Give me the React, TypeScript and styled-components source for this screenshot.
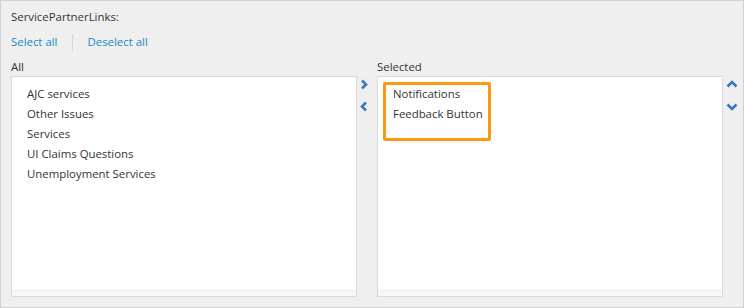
import React from 'react';
import styled, { createGlobalStyle } from 'styled-components';

const GlobalStyle = createGlobalStyle`
    html, body {
        margin: 0;
        padding: 0;
        background: #ffffff;
    }
    body {
        font-family: "Open Sans", "Liberation Sans", Arial, sans-serif;
    }
`;

const Panel = styled.div`
    box-sizing: border-box;
    width: 744px;
    height: 308px;
    background: #efefef;
    border: 1px solid #d2d2d2;
    padding: 7px 0 9px 10px;
    display: flex;
    flex-direction: column;
    font-size: 11.4px;
    color: #333333;
`;

const FieldTitle = styled.div`
    line-height: 18px;
    height: 18px;
`;

const LinkBar = styled.div`
    display: flex;
    align-items: center;
    margin-top: 7px;
    height: 18px;
`;

const LinkButton = styled.button`
    border: none;
    background: none;
    padding: 0;
    font: inherit;
    line-height: 18px;
    color: #1a87c6;
    cursor: pointer;
`;

const Divider = styled.span`
    width: 1px;
    height: 17px;
    background: #d6d6d6;
    margin: 0 14px 0 15px;
`;

const Columns = styled.div`
    display: grid;
    grid-template-columns: 346px 20px 346px 20px;
    grid-template-rows: 18px 221px;
    margin-top: 7px;
`;

const ColumnLabel = styled.div<{ $col: number }>`
    grid-column: ${p => p.$col};
    grid-row: 1;
    line-height: 18px;
`;

const ListBox = styled.div<{ $col: number }>`
    grid-column: ${p => p.$col};
    grid-row: 2;
    box-sizing: border-box;
    border: 1px solid #dadada;
    background: #ffffff;
    display: flex;
    flex-direction: column;
`;

const ListBody = styled.ul`
    flex: 1;
    list-style: none;
    margin: 0;
    padding: 7px 0 0 15px;
`;

const ListItem = styled.li`
    line-height: 20px;
    height: 20px;
    white-space: nowrap;
`;

const ScrollTrack = styled.div`
    height: 5px;
    background: #f6f6f6;
    border-top: 1px solid #ededed;
`;

const Highlight = styled.div`
    position: relative;
    &::after {
        content: '';
        position: absolute;
        left: -10px;
        top: -2px;
        width: 108px;
        height: 59px;
        box-sizing: border-box;
        border: 3px solid #fb9a10;
        border-radius: 2px;
        pointer-events: none;
    }
`;

const ArrowColumn = styled.div<{ $col: number; $pad: number }>`
    grid-column: ${p => p.$col};
    grid-row: 2;
    display: flex;
    flex-direction: column;
    align-items: flex-start;
    padding-left: ${p => p.$pad}px;
    padding-top: 3px;
    gap: 11px;
`;

const ArrowButton = styled.button`
    border: none;
    background: none;
    padding: 0;
    width: 12px;
    height: 11px;
    display: flex;
    align-items: center;
    justify-content: center;
    cursor: pointer;
    svg {
        display: block;
    }
`;

type Dir = 'left' | 'right' | 'up' | 'down';

const chevronPath: Record<Dir, string> = {
    right: 'M4 1.5 L8 5.5 L4 9.5',
    left: 'M8 1.5 L4 5.5 L8 9.5',
    up: 'M1.5 7.5 L6 3 L10.5 7.5',
    down: 'M1.5 3.5 L6 8 L10.5 3.5',
};

const Chevron: React.FC<{ dir: Dir }> = ({ dir }) => (
    <svg width="12" height="11" viewBox="0 0 12 11">
        <path d={chevronPath[dir]} fill="none" stroke="#3a78bd" strokeWidth="2.6" strokeLinecap="butt" strokeLinejoin="miter" />
    </svg>
);

const allItems = ['AJC services', 'Other Issues', 'Services', 'UI Claims Questions', 'Unemployment Services'];
const selectedItems = ['Notifications', 'Feedback Button'];

export default function App() {
    return (
        <>
            <GlobalStyle />
            <Panel>
                <FieldTitle>ServicePartnerLinks:</FieldTitle>
                <LinkBar>
                    <LinkButton>Select all</LinkButton>
                    <Divider />
                    <LinkButton>Deselect all</LinkButton>
                </LinkBar>
                <Columns>
                    <ColumnLabel $col={1}>All</ColumnLabel>
                    <ColumnLabel $col={3}>Selected</ColumnLabel>

                    <ListBox $col={1}>
                        <ListBody>
                            {allItems.map(item => <ListItem key={item}>{item}</ListItem>)}
                        </ListBody>
                        <ScrollTrack />
                    </ListBox>

                    <ArrowColumn $col={2} $pad={1}>
                        <ArrowButton title="Add"><Chevron dir="right" /></ArrowButton>
                        <ArrowButton title="Remove"><Chevron dir="left" /></ArrowButton>
                    </ArrowColumn>

                    <ListBox $col={3}>
                        <ListBody>
                            <Highlight>
                                {selectedItems.map(item => <ListItem key={item}>{item}</ListItem>)}
                            </Highlight>
                        </ListBody>
                        <ScrollTrack />
                    </ListBox>

                    <ArrowColumn $col={4} $pad={3}>
                        <ArrowButton title="Move up"><Chevron dir="up" /></ArrowButton>
                        <ArrowButton title="Move down"><Chevron dir="down" /></ArrowButton>
                    </ArrowColumn>
                </Columns>
            </Panel>
        </>
    );
}
